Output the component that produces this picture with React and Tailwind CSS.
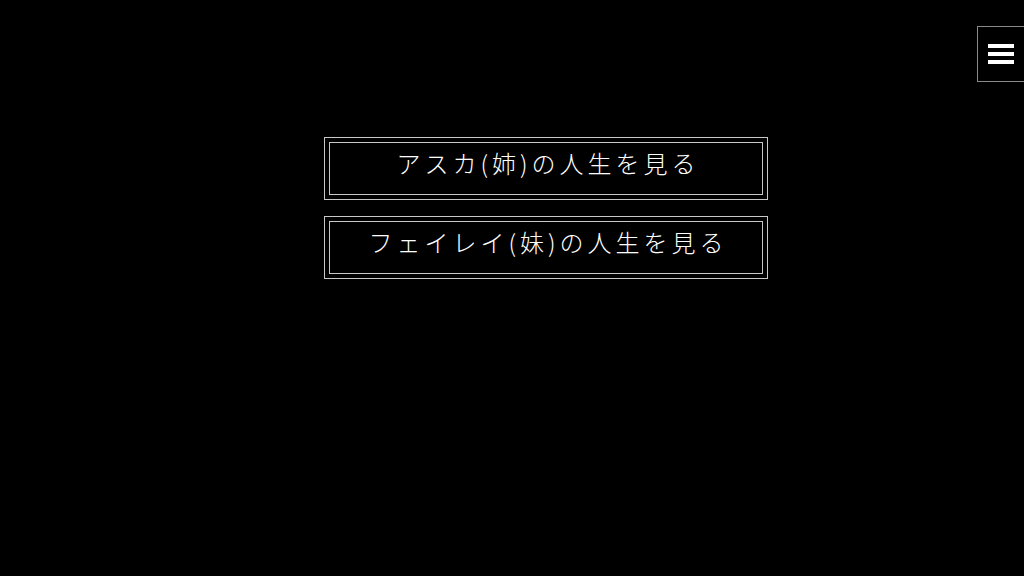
import React from "react";

const font = { fontFamily: '"Noto Sans CJK JP", "Noto Sans", sans-serif' };

function LifeButton({ label }) {
  return (
    <button
      type="button"
      className="block w-[444px] h-[63px] border border-[#c8c8c8] p-[4px] bg-black cursor-pointer"
    >
      <div className="w-full h-full border border-[#c8c8c8] flex items-center justify-center">
        <span
          className="text-[24px] leading-none font-light text-white tracking-[4px] pl-[4px] -mt-[12px]"
          style={font}
        >
          {label}
        </span>
      </div>
    </button>
  );
}

export default function App() {
  return (
    <div className="relative w-[1024px] h-[576px] bg-black overflow-hidden" style={font}>
      <div className="flex flex-col gap-[16px] pt-[137px] pl-[324px]">
        <LifeButton label="アスカ(姉)の人生を見る" />
        <LifeButton label="フェイレイ(妹)の人生を見る" />
      </div>
      <button
        type="button"
        className="absolute top-[26px] left-[977px] w-[56px] h-[56px] border border-[#8a8a8a] bg-black flex flex-col gap-[4px] pt-[17px] pl-[10px]"
      >
        <span className="block w-[26px] h-[4px] bg-white" />
        <span className="block w-[26px] h-[4px] bg-white" />
        <span className="block w-[26px] h-[4px] bg-white" />
      </button>
    </div>
  );
}
